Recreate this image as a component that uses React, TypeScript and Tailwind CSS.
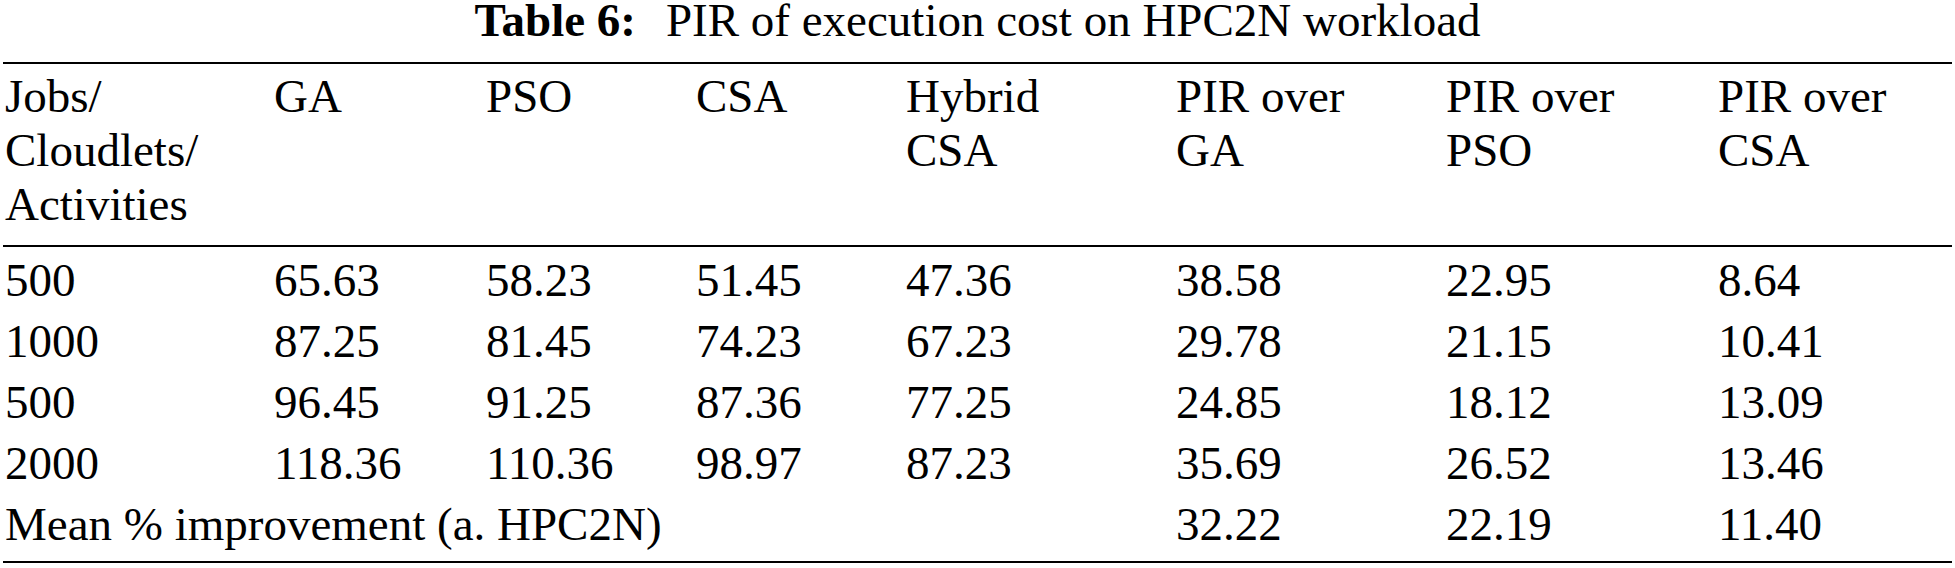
const headers = [
  ['Jobs/', 'Cloudlets/', 'Activities'],
  ['GA'],
  ['PSO'],
  ['CSA'],
  ['Hybrid', 'CSA'],
  ['PIR over', 'GA'],
  ['PIR over', 'PSO'],
  ['PIR over', 'CSA'],
];

const rows = [
  ['500', '65.63', '58.23', '51.45', '47.36', '38.58', '22.95', '8.64'],
  ['1000', '87.25', '81.45', '74.23', '67.23', '29.78', '21.15', '10.41'],
  ['500', '96.45', '91.25', '87.36', '77.25', '24.85', '18.12', '13.09'],
  ['2000', '118.36', '110.36', '98.97', '87.23', '35.69', '26.52', '13.46'],
];

const mean = ['32.22', '22.19', '11.40'];

const gridCols = 'grid grid-cols-[269px_212px_210px_210px_270px_270px_272px_1fr]';

const App = () => {
  return (
    <div className="w-[1955px] h-[568px] bg-white text-black [font-family:'Liberation_Serif','Times_New_Roman',serif] text-[47px] font-normal overflow-hidden">
      <div className="text-center leading-[40px] whitespace-pre">
        <span className="font-bold">Table 6:</span>
        <span className="ml-[30px]">PIR of execution cost on HPC2N workload</span>
      </div>

      <div className="mx-[3px] mt-[22px] border-t-2 border-b-2 border-black">
        {/* header */}
        <div className={`${gridCols} pt-[5px] pb-[14px] border-b-2 border-black leading-[54px]`}>
          {headers.map((lines, i) => (
            <div key={i} className="pl-[2px]">
              {lines.map(l => (
                <div key={l}>{l}</div>
              ))}
            </div>
          ))}
        </div>

        {/* body */}
        <div className="pt-[3px] pb-[6px] leading-[61px]">
          {rows.map((r, i) => (
            <div key={i} className={gridCols}>
              {r.map((c, j) => (
                <div key={j} className="pl-[2px]">{c}</div>
              ))}
            </div>
          ))}
          <div className={gridCols}>
            <div className="col-span-5 pl-[2px] whitespace-nowrap">Mean % improvement (a. HPC2N)</div>
            {mean.map((c, j) => (
              <div key={j} className="pl-[2px]">{c}</div>
            ))}
          </div>
        </div>
      </div>
    </div>
  );
};

export default App;
